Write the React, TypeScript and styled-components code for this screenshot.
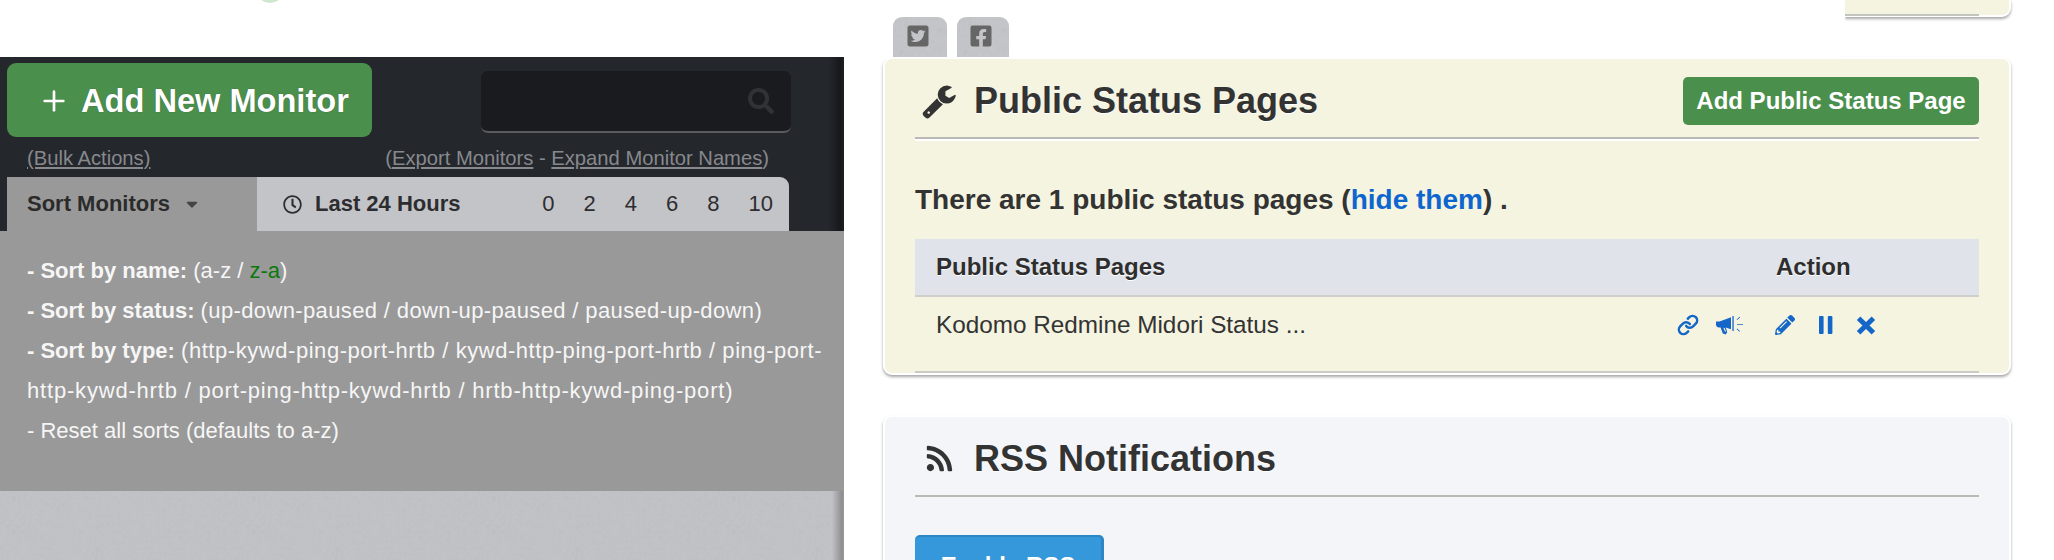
import React from "react";
import styled, { createGlobalStyle } from "styled-components";
import { Plus, Link as LinkIcon } from "lucide-react";
import {
  FaSearch, FaTwitterSquare, FaFacebookSquare, FaRss,
  FaPencilAlt, FaCaretDown, FaRegClock,
} from "react-icons/fa";

const Global = createGlobalStyle`
  html, body { margin: 0; padding: 0; background: #fff; }
  body { font-family: "Liberation Sans", Arial, sans-serif; color: #333; }
  a { color: inherit; }
`;

const noise = `url("data:image/svg+xml,%3Csvg xmlns='http://www.w3.org/2000/svg' width='240' height='240'%3E%3Cfilter id='n'%3E%3CfeTurbulence baseFrequency='0.18' numOctaves='3'/%3E%3CfeColorMatrix values='0 0 0 0 0.4 0 0 0 0 0.4 0 0 0 0 0.42 0 0 0 0.22 0'/%3E%3C/filter%3E%3Crect width='240' height='240' filter='url(%23n)'/%3E%3C/svg%3E")`;

const Page = styled.div`
  width: 2054px;
  height: 560px;
  display: flex;
  overflow: hidden;
  background: #fff;
`;

const LeftColumn = styled.div`
  width: 844px;
  height: 560px;
  flex: none;
  display: flex;
  flex-direction: column;
`;

const TopGap = styled.div`
  height: 57px;
  flex: none;
  position: relative;
  overflow: hidden;
`;

const LogoArc = styled.div`
  position: absolute;
  left: 256px;
  top: -24px;
  width: 28px;
  height: 27px;
  border-radius: 50%;
  background: #cfe6cf;
`;

const DarkPanel = styled.div`
  height: 174px;
  flex: none;
  box-sizing: border-box;
  padding: 6px 53px 0 7px;
  background: linear-gradient(to right, #24272c 0, #24272c 828px, #17181b 840px, #1d1f22 844px);
  display: flex;
  flex-direction: column;
`;

const ToolRow = styled.div`
  display: flex;
  align-items: flex-start;
  justify-content: space-between;
  height: 74px;
`;

const AddMonitorButton = styled.button`
  width: 365px;
  height: 74px;
  border: 0;
  border-radius: 9px;
  background: #4b8f4d;
  color: #fff;
  font: bold 32.6px "Liberation Sans", Arial, sans-serif;
  display: flex;
  align-items: center;
  gap: 11px;
  padding: 1px 0 0 31px;
  text-shadow: 0 0 1px rgba(0, 0, 0, 0.4);
`;

const SearchBox = styled.div`
  width: 310px;
  height: 62px;
  margin-top: 8px;
  box-sizing: border-box;
  border-radius: 7px;
  background: #1a1b1e;
  border-bottom: 2px solid #5a5b5e;
  display: flex;
  align-items: center;
  justify-content: flex-end;
  padding-right: 17px;
  color: #303235;
  font-size: 26px;
`;

const LinksRow = styled.div`
  height: 40px;
  padding-top: 2px;
  box-sizing: border-box;
  display: flex;
  align-items: center;
  justify-content: space-between;
  padding-left: 20px;
  padding-right: 22px;
  font-size: 20.2px;
  color: #87898d;
`;

const TabRow = styled.div`
  height: 54px;
  width: 782px;
  display: flex;
`;

const SortTab = styled.div`
  width: 250px;
  box-sizing: border-box;
  background: #999;
  padding-left: 20px;
  display: flex;
  align-items: center;
  gap: 13px;
  font-weight: bold;
  font-size: 22px;
  color: #2b2b2b;
`;

const CaretMark = styled.span`
  display: flex;
  color: #444;
  font-size: 18px;
`;

const RangeTab = styled.div`
  flex: 1;
  background: #c3c4c8;
  border-top-right-radius: 9px;
  display: flex;
  align-items: center;
  padding-left: 26px;
  font-weight: bold;
  font-size: 22px;
  color: #2d2d30;
`;

const RangeLabel = styled.span`
  margin-left: 13px;
`;

const Hours = styled.div`
  margin-left: auto;
  margin-right: 16px;
  display: flex;
  gap: 29px;
  font-weight: normal;
`;

const SortPanel = styled.div`
  height: 260px;
  flex: none;
  box-sizing: border-box;
  background: #999;
  padding: 20px 20px 0 27px;
  color: #f6f6f6;
  font-size: 22px;
  line-height: 40px;
`;

const SortLine = styled.div``;

const Detail = styled.span<{ $track: number }>`
  letter-spacing: ${(p) => p.$track}px;
`;

const GreenLink = styled.span`
  color: #0b7a0b;
`;

const Paper = styled.div`
  flex: 1;
  background: ${noise}, linear-gradient(to right, #c2c3c7 0, #c2c3c7 832px, #8c8c8e 842px, #9a9a9c 844px);
`;

const RightColumn = styled.div`
  flex: 1;
  box-sizing: border-box;
  padding: 0 43px 0 39px;
  display: flex;
  flex-direction: column;
`;

const TopStrip = styled.div`
  height: 59px;
  margin-bottom: -2px;
  flex: none;
  display: flex;
  position: relative;
  z-index: 1;
`;

const SocialTabs = styled.div`
  flex: 1;
  height: 59px;
  box-sizing: border-box;
  background: #fff;
  display: flex;
  gap: 10px;
  padding: 17px 0 2px 10px;
`;

const SocialTab = styled.div<{ $w: number }>`
  width: ${(p) => p.$w}px;
  height: 40px;
  box-sizing: border-box;
  padding: 0 4px 3px 0;
  border-radius: 9px 9px 0 0;
  background: ${noise}, #c5c6ca;
  color: #666;
  font-size: 24px;
  display: flex;
  align-items: center;
  justify-content: center;
`;

const PrevCardClip = styled.div`
  width: 170px;
  height: 24px;
  margin-right: -4px;
  overflow: hidden;
  flex: none;
`;

const PrevCardEnd = styled.div`
  width: 166px;
  height: 17px;
  box-sizing: border-box;
  padding-right: 30px;
  background: #f5f4e0;
  border-right: 2px solid #fff;
  border-bottom: 2px solid #fff;
  border-radius: 0 0 9px 0;
  box-shadow: 0 2px 3px rgba(0, 0, 0, 0.35);
`;

const PrevRule = styled.div`
  height: 14px;
  border-bottom: 2px solid #c4c4be;
`;

const Card = styled.section<{ $bg: string }>`
  background: ${(p) => p.$bg};
  border: 2px solid #fff;
  border-radius: 9px;
  box-shadow: 0 2px 3px rgba(0, 0, 0, 0.35);
  padding: 0 30px;
  box-sizing: border-box;
`;

const StatusCard = styled(Card)`
  height: 318px;
  flex: none;
`;

const RssCard = styled(Card)`
  margin-top: 40px;
  height: 200px;
  flex: none;
`;

const CardHeader = styled.header<{ $h: number }>`
  height: ${(p) => p.$h}px;
  box-sizing: border-box;
  padding-top: 5px;
  border-bottom: 2px solid #b9b9b6;
  display: flex;
  align-items: center;
  position: relative;
`;

const HeaderIcon = styled.span<{ $pad: number; $size: number }>`
  width: 59px;
  padding-left: ${(p) => p.$pad}px;
  box-sizing: border-box;
  font-size: ${(p) => p.$size}px;
  display: flex;
  color: #333;
`;

const CardTitle = styled.h2`
  margin: 0;
  font-size: 36px;
  font-weight: bold;
  color: #333;
  text-shadow: 0 1px 0 #fff;
`;

const WhiteRule = styled.div`
  height: 2px;
  background: #fff;
`;

const AddPageButton = styled.button`
  margin-left: auto;
  width: 296px;
  height: 48px;
  border: 0;
  border-radius: 5px;
  background: #4b8f4d;
  color: #fff;
  font: bold 24px "Liberation Sans", Arial, sans-serif;
  padding: 0;
`;

const Summary = styled.p`
  margin: 41px 0 0;
  font-size: 28px;
  line-height: 36px;
  font-weight: bold;
  color: #333;
`;

const BlueLink = styled.span`
  color: #0d66d0;
`;

const Table = styled.div`
  margin-top: 21px;
`;

const TableHead = styled.div`
  height: 58px;
  box-sizing: border-box;
  background: #e0e3ea;
  border-bottom: 2px solid #cfcfcc;
  display: flex;
  align-items: center;
  padding-left: 21px;
  font-weight: bold;
  font-size: 24px;
  color: #2e2e2e;
  text-shadow: 0 1px 0 #fff;
`;

const ActionHead = styled.span`
  margin-left: auto;
  width: 203px;
`;

const TableRow = styled.div`
  height: 76px;
  box-sizing: border-box;
  border-bottom: 2px solid #cbcbc6;
  display: flex;
  align-items: center;
  padding: 0 0 18px 21px;
  font-size: 24.3px;
  color: #333;
`;

const RowActions = styled.div`
  margin-left: auto;
  margin-right: 103px;
  display: flex;
  align-items: center;
  color: #1467c8;
`;

const ActionIcon = styled.span<{ $w: number; $size: number }>`
  width: ${(p) => p.$w}px;
  font-size: ${(p) => p.$size}px;
  display: flex;
`;

const EnableButton = styled.button`
  display: block;
  margin-top: 38px;
  width: 189px;
  height: 60px;
  border: 0;
  border-top: 2px solid #2d86c3;
  border-right: 3px solid #2d86c3;
  border-radius: 5px 5px 0 0;
  background: #3498db;
  color: #fff;
  font: bold 24px "Liberation Sans", Arial, sans-serif;
  padding: 0;
  text-align: center;
  box-sizing: border-box;
`;

function Wrench() {
  return (
    <svg width="36" height="36" viewBox="0 0 1792 1792" fill="currentColor" aria-hidden="true">
      <path d="M448 1472q0-26-19-45t-45-19-45 19-19 45 19 45 45 19 45-19 19-45zm644-420l-682 682q-37 37-90 37-52 0-91-37l-106-108q-38-36-38-90 0-53 38-91l681-681q39 98 114.5 173.5t173.5 114.5zm634-435q0 39-23 106-47 134-164.5 217.5t-258.5 83.5q-185 0-316.5-131.5t-131.5-316.5 131.5-316.5 316.5-131.5q58 0 121.5 16.5t107.5 46.5q16 11 16 28t-16 28l-293 169v224l193 107q5-3 79-48.5t135.5-81 70.5-35.5q15 0 23.5 10t8.5 25z" />
    </svg>
  );
}

function Megaphone() {
  return (
    <svg width="29" height="20" viewBox="0 0 29 20" fill="currentColor" aria-hidden="true">
      <path d="M0 6.6h3.6L15 2.2v12L9.8 12.6l1.4 4.4-1.4 2.4-3-1-2.2-5.8H3.2C1.4 12.6 0 11.4 0 9.6zM7.4 12.8l1.6 4 1-.3-1.3-3.6z" />
      <path d="M16.4 1h1.3v15h-1.3z" />
      <path d="M21 9h6v.8h-6zM20.6 4.4l3-2.6.5.6-3 2.6zM20.6 14.2l.5-.6 3 2.6-.5.6z" />
    </svg>
  );
}

function PauseBars() {
  return (
    <svg width="14" height="18" viewBox="0 0 14 18" fill="currentColor" aria-hidden="true">
      <rect x="0" y="0" width="4.6" height="18" rx="1" />
      <rect x="8.8" y="0" width="4.6" height="18" rx="1" />
    </svg>
  );
}

function CloseCross() {
  return (
    <svg width="20" height="19" viewBox="0 0 20 19" fill="none" stroke="currentColor" strokeWidth="5" aria-hidden="true">
      <path d="M2.6 2.2 17.4 16.8M17.4 2.2 2.6 16.8" />
    </svg>
  );
}

export default function App() {
  return (
    <Page>
      <Global />
      <LeftColumn>
        <TopGap>
          <LogoArc />
        </TopGap>
        <DarkPanel>
          <ToolRow>
            <AddMonitorButton>
              <Plus size={32} strokeWidth={2} />
              <span>Add New Monitor</span>
            </AddMonitorButton>
            <SearchBox>
              <FaSearch />
            </SearchBox>
          </ToolRow>
          <LinksRow>
            <a href="#bulk">(Bulk Actions)</a>
            <span>
              (<a href="#export">Export Monitors</a> - <a href="#expand">Expand Monitor Names</a>)
            </span>
          </LinksRow>
          <TabRow>
            <SortTab>
              Sort Monitors
              <CaretMark>
                <FaCaretDown />
              </CaretMark>
            </SortTab>
            <RangeTab>
              <FaRegClock size={19} />
              <RangeLabel>Last 24 Hours</RangeLabel>
              <Hours>
                {[0, 2, 4, 6, 8, 10].map((h) => (
                  <span key={h}>{h}</span>
                ))}
              </Hours>
            </RangeTab>
          </TabRow>
        </DarkPanel>
        <SortPanel>
          <SortLine>
            <b>- Sort by name:</b> (a-z / <GreenLink>z-a</GreenLink>)
          </SortLine>
          <SortLine>
            <b>- Sort by status:</b>{" "}
            <Detail $track={0.37}>(up-down-paused / down-up-paused / paused-up-down)</Detail>
          </SortLine>
          <SortLine>
            <b>- Sort by type:</b>{" "}
            <Detail $track={0.55}>(http-kywd-ping-port-hrtb / kywd-http-ping-port-hrtb / ping-port-</Detail>
            <Detail $track={0.81}>http-kywd-hrtb / port-ping-http-kywd-hrtb / hrtb-http-kywd-ping-port)</Detail>
          </SortLine>
          <SortLine>- Reset all sorts (defaults to a-z)</SortLine>
        </SortPanel>
        <Paper />
      </LeftColumn>
      <RightColumn>
        <TopStrip>
          <SocialTabs>
            <SocialTab $w={54}>
              <FaTwitterSquare />
            </SocialTab>
            <SocialTab $w={52}>
              <FaFacebookSquare />
            </SocialTab>
          </SocialTabs>
          <PrevCardClip>
            <PrevCardEnd>
              <PrevRule />
            </PrevCardEnd>
          </PrevCardClip>
        </TopStrip>
        <StatusCard $bg="#f5f4e0">
          <CardHeader $h={80}>
            <HeaderIcon $pad={6} $size={33}>
              <Wrench />
            </HeaderIcon>
            <CardTitle>Public Status Pages</CardTitle>
            <AddPageButton>Add Public Status Page</AddPageButton>
          </CardHeader>
          <WhiteRule />
          <Summary>
            There are 1 public status pages (<BlueLink>hide them</BlueLink>) .
          </Summary>
          <Table>
            <TableHead>
              Public Status Pages
              <ActionHead>Action</ActionHead>
            </TableHead>
            <TableRow>
              Kodomo Redmine Midori Status ...
              <RowActions>
                <ActionIcon $w={39} $size={20}><LinkIcon size={22} strokeWidth={2.7} /></ActionIcon>
                <ActionIcon $w={59} $size={20}><Megaphone /></ActionIcon>
                <ActionIcon $w={44} $size={20}><FaPencilAlt /></ActionIcon>
                <ActionIcon $w={37} $size={18}><PauseBars /></ActionIcon>
                <ActionIcon $w={20} $size={20}><CloseCross /></ActionIcon>
              </RowActions>
            </TableRow>
          </Table>
        </StatusCard>
        <RssCard $bg="#f4f5f9">
          <CardHeader $h={80}>
            <HeaderIcon $pad={10} $size={29}>
              <FaRss />
            </HeaderIcon>
            <CardTitle>RSS Notifications</CardTitle>
          </CardHeader>
          <EnableButton>Enable RSS</EnableButton>
        </RssCard>
      </RightColumn>
    </Page>
  );
}
